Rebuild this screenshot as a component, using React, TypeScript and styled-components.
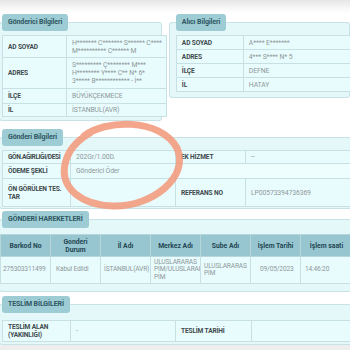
import styled, { createGlobalStyle } from 'styled-components'

const GlobalStyle = createGlobalStyle`
  html, body {
    margin: 0;
    padding: 0;
    background: #ffffff;
  }
  body {
    font-family: Roboto, "Liberation Sans", Arial, sans-serif;
  }
`

const Page = styled.div`
  position: relative;
  width: 350px;
  height: 350px;
  overflow: hidden;
  padding-top: 14px;
  box-sizing: border-box;
  background: linear-gradient(#e6e6e6 0px, #f7f7f7 8px, #ffffff 14px, #ffffff 339px, #eeeeee 342px);
`

const TopRow = styled.div`
  display: flex;
  align-items: flex-start;
  gap: 7px;
  margin-left: -1px;
`

const Panel = styled.fieldset<{ $width: number; $pl?: number; $pt?: number; $pb?: number }>`
  margin: 0;
  min-width: 0;
  box-sizing: border-box;
  width: ${({ $width }) => $width}px;
  padding: ${({ $pt = 4 }) => $pt}px 0 ${({ $pb = 3 }) => $pb}px ${({ $pl = 2 }) => $pl}px;
  border: 1px solid #c8e2e6;
  border-radius: 3px;
  background: #e4f8f9;
`

const WidePanel = styled(Panel)`
  margin: 0 0 0 -1px;
`

const Tab = styled.legend<{ $ml?: number }>`
  box-sizing: border-box;
  height: 17px;
  line-height: 17px;
  padding: 0 6px;
  margin-left: ${({ $ml = 0 }) => $ml}px;
  background: #9dccd5;
  border-radius: 3px;
  color: #2f5661;
  font-size: 7px;
  font-weight: 700;
  letter-spacing: -0.1px;
  white-space: nowrap;
`

const Gap = styled.div<{ $h: number }>`
  height: ${({ $h }) => $h}px;
`

const Table = styled.table<{ $width: number }>`
  width: ${({ $width }) => $width}px;
  table-layout: fixed;
  border-collapse: collapse;
  background: #e9fcfd;
`

const Row = styled.tr<{ $h: number }>`
  height: ${({ $h }) => $h}px;
`

const Label = styled.td<{ $tight?: boolean }>`
  border: 1px solid #c6e0e4;
  padding: 0 2px 0 5px;
  color: #3f4a4e;
  font-size: 6.6px;
  font-weight: 700;
  line-height: 8px;
  letter-spacing: ${({ $tight }) => ($tight ? '-0.4px' : '-0.15px')};
  white-space: ${({ $tight }) => ($tight ? 'nowrap' : 'normal')};
  vertical-align: middle;
  overflow: hidden;
`

const Value = styled.td`
  border: 1px solid #c6e0e4;
  padding: 0 4px 0 5px;
  color: #8d989b;
  font-size: 6.8px;
  line-height: 8px;
  letter-spacing: -0.1px;
  vertical-align: middle;
`

const Blank = styled.td`
  border: none;
  border-top: 1px solid #c6e0e4;
  background: #eefdfe;
`

const Head = styled.th`
  border: 1px solid #b7d6dc;
  background: #98c6d0;
  color: #234653;
  font-size: 6.8px;
  font-weight: 700;
  line-height: 8px;
  text-align: center;
  vertical-align: middle;
  padding: 0 2px;
`

const Cell = styled.td<{ $pl?: number }>`
  border: 1px solid #c6e0e4;
  padding: 0 0 0 ${({ $pl = 3 }) => $pl}px;
  color: #8d989b;
  font-size: 6.6px;
  line-height: 7.5px;
  letter-spacing: -0.15px;
  vertical-align: middle;
  overflow: hidden;
`

const NoWrap = styled.span`
  white-space: nowrap;
`

const Scribble = styled.svg`
  position: absolute;
  left: 0;
  top: 0;
  pointer-events: none;
`

const Cols = ({ widths }: { widths: number[] }) => (
  <colgroup>
    {widths.map((w, i) => (
      <col key={i} style={{ width: w }} />
    ))}
  </colgroup>
)

export default function App() {
  return (
    <>
      <GlobalStyle />
      <Page>
        <TopRow>
          <Panel $width={171} $pb={3}>
            <Tab>Gönderici Bilgileri</Tab>
            <Table $width={164}>
              <Cols widths={[64, 100]} />
              <tbody>
                <Row $h={22}>
                  <Label>AD SOYAD</Label>
                  <Value>H******* C******* S****** C**** M********** C****** M</Value>
                </Row>
                <Row $h={31}>
                  <Label>ADRES</Label>
                  <Value>S********* Ç******** M*** H******** Y**** C** N* 6* 3***** B************ - İ**</Value>
                </Row>
                <Row $h={15}>
                  <Label>İLÇE</Label>
                  <Value>BÜYÜKÇEKMECE</Value>
                </Row>
                <Row $h={13}>
                  <Label>İL</Label>
                  <Value>İSTANBUL(AVR)</Value>
                </Row>
              </tbody>
            </Table>
          </Panel>
          <Panel $width={190} $pl={6} $pb={5}>
            <Tab>Alıcı Bilgileri</Tab>
            <Table $width={183}>
              <Cols widths={[67, 116]} />
              <tbody>
                <Row $h={14}>
                  <Label>AD SOYAD</Label>
                  <Value>A**** E*******</Value>
                </Row>
                <Row $h={14}>
                  <Label>ADRES</Label>
                  <Value>4*** S**** N* 5</Value>
                </Row>
                <Row $h={14}>
                  <Label>İLÇE</Label>
                  <Value>DEFNE</Value>
                </Row>
                <Row $h={14}>
                  <Label>İL</Label>
                  <Value>HATAY</Value>
                </Row>
              </tbody>
            </Table>
          </Panel>
        </TopRow>

        <Gap $h={8} />
        <WidePanel $width={354} $pt={4} $pb={1}>
          <Tab>Gönderi Bilgileri</Tab>
          <Table $width={350}>
            <Cols widths={[68, 105, 70, 107]} />
            <tbody>
              <Row $h={13}>
                <Label $tight>GÖN.AĞIRLIĞI/DESİ</Label>
                <Value>202Gr/1.00D.</Value>
                <Label>EK HİZMET</Label>
                <Value>--</Value>
              </Row>
              <Row $h={15}>
                <Label>ÖDEME ŞEKLİ</Label>
                <Value>Gönderici Öder</Value>
                <Blank />
                <Blank />
              </Row>
              <Row $h={28}>
                <Label>ÖN GÖRÜLEN TES. TAR</Label>
                <Value />
                <Label>REFERANS NO</Label>
                <Value>LP00573394736369</Value>
              </Row>
            </tbody>
          </Table>
        </WidePanel>

        <Gap $h={2} />
        <WidePanel $width={354} $pl={0} $pt={6} $pb={7}>
          <Tab $ml={2}>GÖNDERİ HAREKETLERİ</Tab>
          <Table $width={352}>
            <Cols widths={[50, 50, 50, 50, 50, 50, 52]} />
            <thead>
              <Row $h={22}>
                <Head>Barkod No</Head>
                <Head>
                  Gonderi
                  <br />
                  Durum
                </Head>
                <Head>İl Adı</Head>
                <Head>Merkez Adı</Head>
                <Head>Sube Adı</Head>
                <Head>İşlem Tarihi</Head>
                <Head>İşlem saati</Head>
              </Row>
            </thead>
            <tbody>
              <Row $h={27}>
                <Cell $pl={2}>
                  <NoWrap>275303311499</NoWrap>
                </Cell>
                <Cell $pl={5}>Kabul Edildi</Cell>
                <Cell $pl={3}>
                  <NoWrap>İSTANBUL(AVR)</NoWrap>
                </Cell>
                <Cell $pl={3}>ULUSLARARAS PİM/ULUSLARARAS PİM</Cell>
                <Cell $pl={3}>ULUSLARARAS PİM</Cell>
                <Cell $pl={9}>09/05/2023</Cell>
                <Cell $pl={4}>14:46:20</Cell>
              </Row>
            </tbody>
          </Table>
        </WidePanel>

        <Gap $h={4} />
        <WidePanel $width={354} $pt={7} $pb={2}>
          <Tab>TESLİM BİLGİLERİ</Tab>
          <Table $width={350}>
            <Cols widths={[68, 105, 76, 101]} />
            <tbody>
              <Row $h={21}>
                <Label>TESLİM ALAN (YAKINLIĞI)</Label>
                <Value>-</Value>
                <Label>TESLİM TARİHİ</Label>
                <Value />
              </Row>
            </tbody>
          </Table>
        </WidePanel>

        <Scribble width="350" height="350" viewBox="0 0 350 350">
          <path
            d="M 84 136 C 104 120, 160 117, 177 148 C 190 177, 152 207, 113 206 C 81 205, 60 188, 65 164 C 68 150, 76 141, 90 133"
            fill="none"
            stroke="#f39a7c"
            strokeOpacity="0.88"
            strokeWidth="7"
            strokeLinecap="round"
          />
        </Scribble>
      </Page>
    </>
  )
}
